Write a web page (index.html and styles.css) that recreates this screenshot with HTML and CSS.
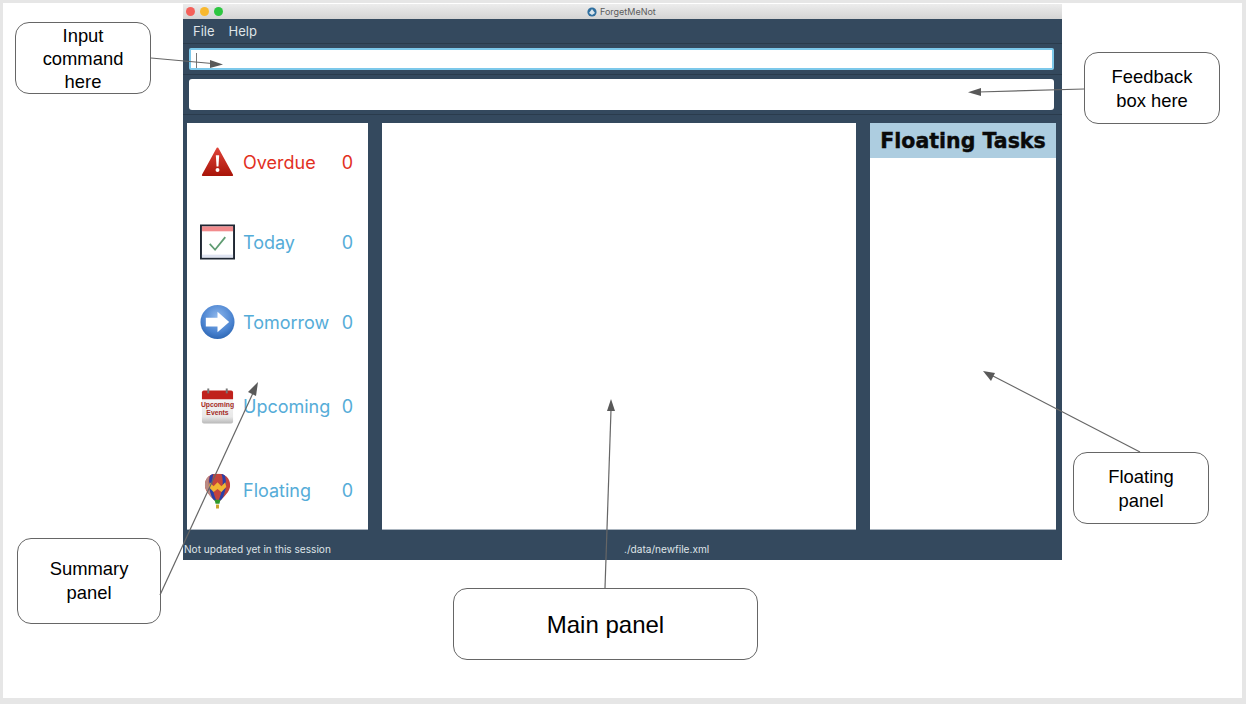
FILE: index.html
```html
<!DOCTYPE html>
<html lang="en">
<head>
    <meta charset="UTF-8">
    <title>ForgetMeNot UI overview</title>
    <link rel="stylesheet" href="styles.css">
</head>
<body>
    <div class="slide">

        <!-- App window -->
        <div class="window">
            <div class="titlebar">
                <span class="light light-red"></span>
                <span class="light light-yellow"></span>
                <span class="light light-green"></span>
                <div class="title">
                    <svg class="title-icon" viewBox="0 0 10 10">
                        <circle cx="5" cy="5" r="4.6" fill="#2f6f9f"/>
                        <path d="M2 6 L5 2 L8 6 L5 8 Z" fill="#d8e4ec"/>
                    </svg>
                    <span>ForgetMeNot</span>
                </div>
            </div>

            <div class="menu">
                <span>File</span>
                <span>Help</span>
            </div>

            <div class="command-row">
                <div class="command-box"><span class="caret"></span></div>
            </div>
            <div class="feedback-row">
                <div class="feedback-box"></div>
            </div>

            <div class="panels">
                <div class="panel summary">
                    <div class="summary-row overdue">
                        <svg class="summary-icon" viewBox="0 0 36 36">
                            <defs>
                                <linearGradient id="redGrad" x1="0" y1="0" x2="0" y2="1">
                                    <stop offset="0" stop-color="#e0443a"/>
                                    <stop offset="1" stop-color="#a81408"/>
                                </linearGradient>
                            </defs>
                            <path d="M18 3 Q18.800 3 19.500 4.500 L34 31 Q34.500 32.500 33 32.500 L3 32.500 Q1.500 32.500 2 31 L16.500 4.500 Q17.200 3 18 3 Z" fill="url(#redGrad)"/>
                            <path d="M16.300 11 L19.700 11 L19 22.500 L17 22.500 Z" fill="#fff"/>
                            <circle cx="18" cy="26.200" r="2" fill="#fff"/>
                        </svg>
                        <span class="summary-label">Overdue</span>
                        <span class="summary-count">0</span>
                    </div>
                    <div class="summary-row">
                        <svg class="summary-icon" viewBox="0 0 36 36">
                            <rect x="1" y="1" width="34" height="34" fill="#fff" stroke="#1f2733" stroke-width="2"/>
                            <rect x="2" y="2" width="32" height="5" fill="#f28b8d"/>
                            <rect x="2" y="31" width="32" height="3" fill="#dfe4f2"/>
                            <path d="M10 20 L15.500 26 L26 13" fill="none" stroke="#5f9c72" stroke-width="1.800"/>
                        </svg>
                        <span class="summary-label">Today</span>
                        <span class="summary-count">0</span>
                    </div>
                    <div class="summary-row">
                        <svg class="summary-icon" viewBox="0 0 36 36">
                            <defs>
                                <radialGradient id="blueGrad" cx="0.500" cy="0.350" r="0.750">
                                    <stop offset="0" stop-color="#8fb8ec"/>
                                    <stop offset="0.600" stop-color="#4a83d0"/>
                                    <stop offset="1" stop-color="#215aa6"/>
                                </radialGradient>
                            </defs>
                            <circle cx="18" cy="18" r="17.500" fill="url(#blueGrad)"/>
                            <path d="M6 13.500 L18 13.500 L18 7.500 L30 18 L18 28.500 L18 22.500 L6 22.500 Z" fill="#fff"/>
                        </svg>
                        <span class="summary-label">Tomorrow</span>
                        <span class="summary-count">0</span>
                    </div>
                    <div class="summary-row">
                        <svg class="summary-icon" viewBox="0 0 36 36">
                            <defs>
                                <linearGradient id="calGrad" x1="0" y1="0" x2="0" y2="1">
                                    <stop offset="0" stop-color="#fafafa"/>
                                    <stop offset="0.800" stop-color="#e8e8e8"/>
                                    <stop offset="1" stop-color="#b8b8b8"/>
                                </linearGradient>
                            </defs>
                            <rect x="2" y="2" width="32" height="34" rx="2" fill="url(#calGrad)"/>
                            <path d="M2 11 L2 4 Q2 2 4 2 L32 2 Q34 2 34 4 L34 11 Z" fill="#c0211c"/>
                            <rect x="7.500" y="0" width="2" height="5" fill="#777"/>
                            <rect x="26.500" y="0" width="2" height="5" fill="#777"/>
                            <text class="cal-text" x="18" y="19">Upcoming</text>
                            <text class="cal-text" x="18" y="27">Events</text>
                        </svg>
                        <span class="summary-label">Upcoming</span>
                        <span class="summary-count">0</span>
                    </div>
                    <div class="summary-row">
                        <svg class="summary-icon" viewBox="0 0 36 36">
                            <defs>
                                <clipPath id="balloonClip">
                                    <path d="M18 0 C26 0 31 5 31 12 C31 19 24 24 21 28 L15 28 C12 24 5 19 5 12 C5 5 10 0 18 0 Z"/>
                                </clipPath>
                            </defs>
                            <g clip-path="url(#balloonClip)">
                                <rect x="0" y="0" width="36" height="30" fill="#c4443c"/>
                                <path d="M11 0 C7 8 9 18 15 28 L12 28 L4 12 L7 0 Z" fill="#b98a84"/>
                                <path d="M14 0 C11 9 13 19 17 28 L14 28 C9 19 8 8 11 0 Z" fill="#2b3fa8"/>
                                <path d="M22 0 C25 9 23 19 19 28 L22 28 C27 19 28 8 25 0 Z" fill="#2b3fa8"/>
                                <path d="M10 9 L14 13 L18 9 L22 13 L26 9 L27 14 L22 19 L18 16 L14 19 L9 14 Z" fill="#f2b632"/>
                            </g>
                            <path d="M15 27 L21 27 L20 31 L16 31 Z" fill="#2f9a2c"/>
                            <rect x="16.500" y="32" width="3" height="4" fill="#c9a227"/>
                        </svg>
                        <span class="summary-label">Floating</span>
                        <span class="summary-count">0</span>
                    </div>
                </div>

                <div class="panel main-panel"></div>

                <div class="panel floating">
                    <div class="floating-title">Floating Tasks</div>
                </div>
            </div>

            <div class="status">
                <span class="status-left">Not updated yet in this session</span>
                <span class="status-mid">./data/newfile.xml</span>
            </div>
        </div>

        <!-- Callouts -->
        <div class="callout callout-input">Input<br>command<br>here</div>
        <div class="callout callout-feedback">Feedback<br>box here</div>
        <div class="callout callout-summary">Summary<br>panel</div>
        <div class="callout callout-main">Main panel</div>
        <div class="callout callout-floating">Floating<br>panel</div>

        <!-- Arrows, coordinates are relative to the page -->
        <svg class="arrows" viewBox="0 0 1246 704">
            <g stroke="#666" stroke-width="1.200" fill="#595959">
                <line x1="151" y1="58" x2="212" y2="63.500"/>
                <path d="M223 64.500 L210 60 L210 68 Z" stroke="none"/>
                <line x1="1084" y1="89" x2="978" y2="92"/>
                <path d="M968 92.300 L981 88 L981 96 Z" stroke="none"/>
                <line x1="160" y1="595" x2="253" y2="393"/>
                <path d="M258 382 L248 392 L256 396 Z" stroke="none"/>
                <line x1="605" y1="588" x2="611" y2="410"/>
                <path d="M611 399 L607 411 L615 411 Z" stroke="none"/>
                <line x1="1140" y1="452" x2="993" y2="376"/>
                <path d="M983 371 L991 381 L995 373 Z" stroke="none"/>
            </g>
        </svg>
    </div>
</body>
</html>
```

FILE: styles.css
```css
html, body {
    margin: 0;
    padding: 0;
    height: 100%;
    overflow: hidden;
}
body {
    background-color: #e6e6e6;
    font-family: "Liberation Sans", Arial, sans-serif;
}
.slide {
    position: absolute;
    left: 3px;
    top: 3px;
    width: 1239px;
    height: 695px;
    background-color: #fff;
}

/* window */
.window {
    position: absolute;
    left: 180px;
    top: 1px;
    width: 879px;
    height: 556px;
    display: flex;
    flex-direction: column;
    background-color: #34495e;
    color: #fff;
    font-family: Inter, "Noto Sans", sans-serif;
}
.titlebar {
    position: relative;
    height: 15px;
    flex: none;
    display: flex;
    align-items: center;
    gap: 5px;
    padding-left: 3px;
    background: linear-gradient(#ececec, #d4d4d4);
}
.light {
    width: 9px;
    height: 9px;
    border-radius: 50%;
}
.light-red { background-color: #f4605a; }
.light-yellow { background-color: #f8b82e; }
.light-green { background-color: #2dc640; }
.title {
    position: absolute;
    left: 404px;
    top: 2px;
    display: flex;
    align-items: center;
    gap: 3px;
    font-size: 9px;
    line-height: 11px;
    color: #5c5c5c;
}
.title-icon {
    width: 10px;
    height: 10px;
}
.menu {
    height: 24px;
    flex: none;
    display: flex;
    align-items: center;
    gap: 14px;
    padding-left: 10px;
    font-size: 13px;
    color: #dfe4e8;
}
.command-row {
    height: 32px;
    flex: none;
    padding: 4px 8px 0 6px;
    box-sizing: border-box;
    border-top: 1px solid #2a3b4c;
    border-bottom: 1px solid #2a3b4c;
}
.command-box {
    height: 22px;
    box-sizing: border-box;
    background-color: #fff;
    border: 2px solid #7cc8ea;
    border-radius: 2px;
    padding: 3px 0 0 5px;
}
.caret {
    display: block;
    width: 1px;
    height: 15px;
    background-color: #777;
}
.feedback-row {
    height: 40px;
    flex: none;
    padding: 4px 8px 0 6px;
    box-sizing: border-box;
    border-bottom: 1px solid #2a3b4c;
}
.feedback-box {
    height: 31px;
    background-color: #fff;
    border-radius: 3px;
}
.panels {
    height: 407px;
    flex: none;
    margin-top: 8px;
    padding: 0 6px 0 4px;
    display: flex;
    gap: 14px;
}
.panel {
    background-color: #fff;
    border-bottom: 1px solid #aab4be;
    box-sizing: border-box;
}

/* summary panel */
.summary {
    width: 181px;
    display: grid;
    grid-template-rows: 80px 80px 80px 88px 1fr;
}
.summary-row {
    display: flex;
    align-items: center;
    gap: 8px;
    padding: 0 15px 2px 13px;
    font-size: 18px;
    color: #55acd8;
}
.summary-row:last-child {
    padding: 1px 15px 0 13px;
}
.overdue {
    color: #e2301f;
}
.summary-icon {
    width: 35px;
    height: 36px;
    flex: none;
}
.summary-label {
    flex: 1;
}
.cal-text {
    font-family: "Liberation Sans", sans-serif;
    font-size: 7px;
    font-weight: bold;
    fill: #a52a25;
    text-anchor: middle;
}

.main-panel {
    width: 474px;
}
.floating {
    width: 186px;
}
.floating-title {
    height: 35px;
    background-color: #adcde0;
    color: #0a0a0a;
    font-family: "DejaVu Sans", sans-serif;
    font-size: 20.5px;
    font-weight: bold;
    -webkit-text-stroke: 0.4px #0a0a0a;
    line-height: 36px;
    text-align: center;
}

.status {
    position: relative;
    flex: 1;
    font-size: 10.1px;
    color: #dfe4e8;
}
.status-left {
    position: absolute;
    left: 1px;
    top: 13px;
}
.status-mid {
    position: absolute;
    left: 441px;
    top: 13px;
}

/* callouts */
.callout {
    position: absolute;
    box-sizing: border-box;
    display: flex;
    align-items: center;
    justify-content: center;
    text-align: center;
    background-color: #fff;
    border: 1px solid #666;
    border-radius: 14px;
    color: #000;
    font-size: 18.4px;
    line-height: 24px;
}
.callout-input {
    left: 12px;
    top: 19px;
    width: 136px;
    height: 72px;
    line-height: 23px;
    padding-top: 1px;
}
.callout-feedback {
    left: 1081px;
    top: 49px;
    width: 136px;
    height: 72px;
    padding-top: 1px;
}
.callout-summary {
    left: 14px;
    top: 535px;
    width: 144px;
    height: 86px;
}
.callout-main {
    left: 450px;
    top: 585px;
    width: 305px;
    height: 72px;
    font-size: 24px;
    padding-top: 1px;
}
.callout-floating {
    left: 1070px;
    top: 449px;
    width: 136px;
    height: 72px;
    padding-top: 1px;
}
.arrows {
    position: absolute;
    left: -3px;
    top: -3px;
    width: 1246px;
    height: 704px;
    pointer-events: none;
}
```
